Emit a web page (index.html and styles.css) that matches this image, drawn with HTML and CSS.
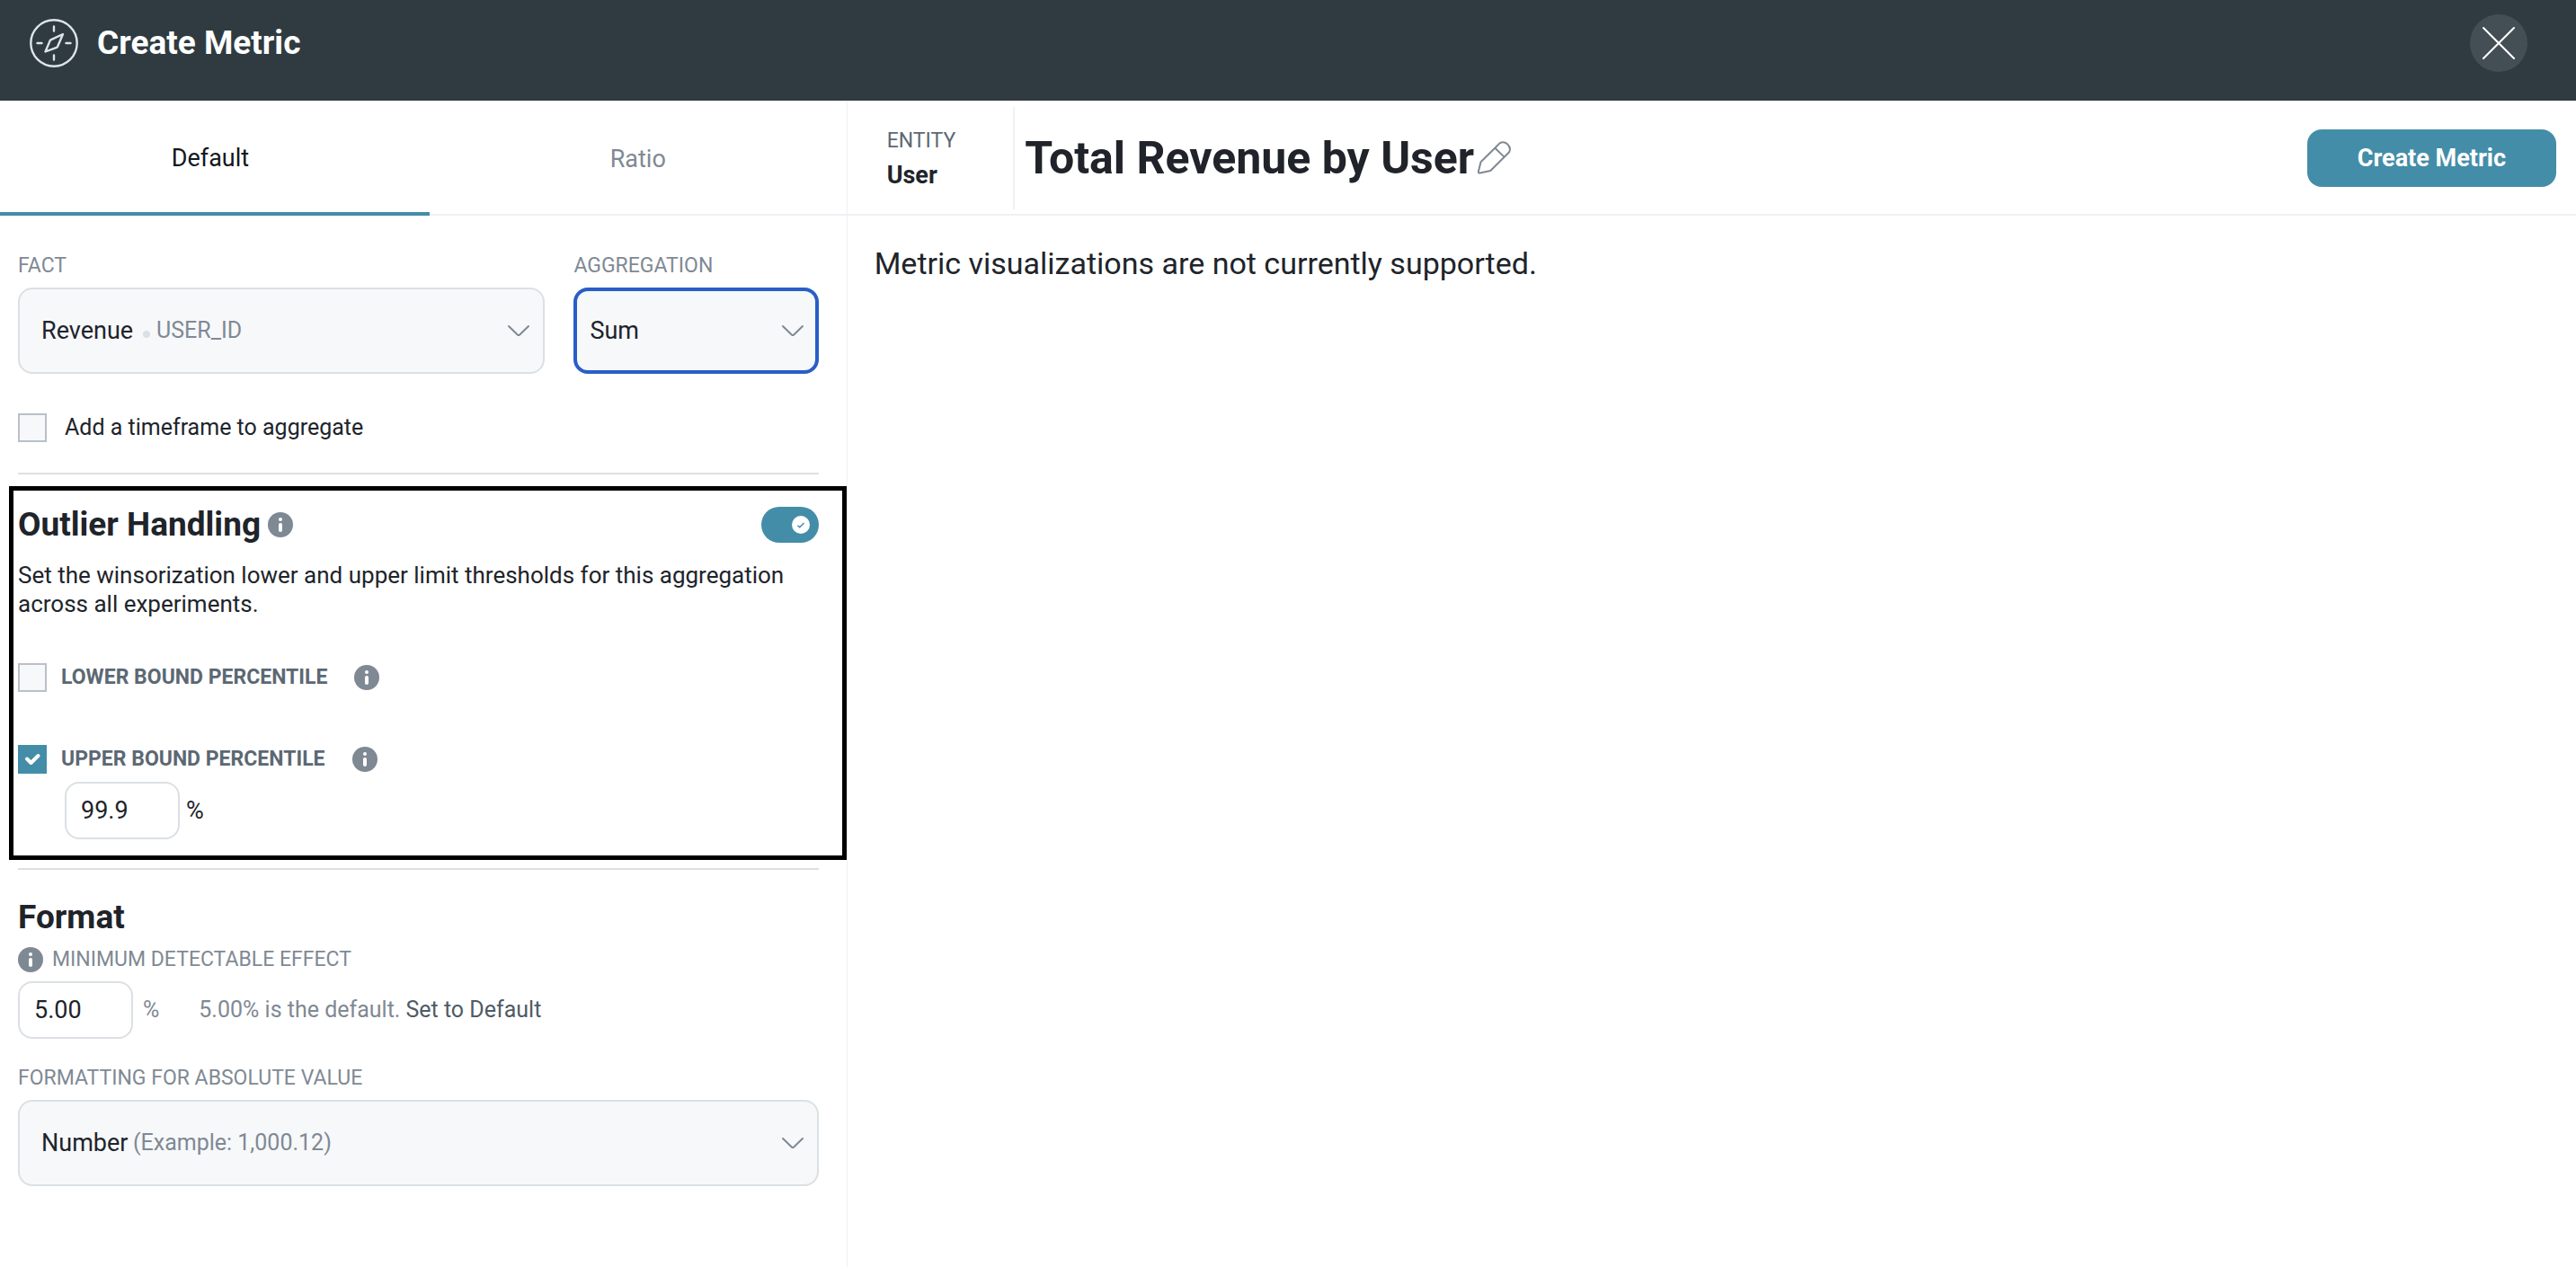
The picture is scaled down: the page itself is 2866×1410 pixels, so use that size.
FILE: index.html
```
<!DOCTYPE html>
<html lang="en">
<head>
<meta charset="utf-8">
<meta name="viewport" content="width=device-width, initial-scale=1">
<title>Create Metric</title>
<link rel="stylesheet" href="styles.css">
</head>
<body>
<svg class="sprite" aria-hidden="true">
  <symbol id="info" viewBox="0 0 28 28">
    <circle cx="14" cy="14" r="14" fill="#7f8994"/>
    <circle cx="14" cy="8" r="2" fill="#fff"/>
    <rect x="12" y="12" width="4" height="10" rx="2" fill="#fff"/>
  </symbol>
  <symbol id="chevron" viewBox="0 0 26 14">
    <path d="M2 2l9.800 9.400q1.200 1.100 2.400 0L24 2" fill="none" stroke="#7f8994" stroke-width="2" stroke-linecap="round"/>
  </symbol>
</svg>

<header class="topbar">
  <svg class="logo" viewBox="0 0 56 56" fill="none" stroke="#dde3e8" stroke-width="2.400" stroke-linecap="round" stroke-linejoin="round" aria-hidden="true">
    <circle cx="28" cy="28" r="25.700"/>
    <path d="M28 9.500v5M28 41.500v5M9.500 28h5M41.500 28h5"/>
    <path d="M38 18l-13.500 6.300q-.5.200-.8.800L18.500 37.500l12.500-4.700q.7-.3 1-.9z"/>
  </svg>
  <span class="topbar-title">Create Metric</span>
  <button class="close" type="button" aria-label="Close">
    <svg viewBox="0 0 64 64" fill="none" stroke="#fff" stroke-width="2" stroke-linecap="round" aria-hidden="true"><path d="M15 15l34 34M49 15L15 49"/></svg>
  </button>
</header>

<div class="layout">
  <aside class="sidebar">
    <div class="tabs" role="tablist">
      <button class="tab tab-active" type="button" role="tab" aria-selected="true">Default</button>
      <button class="tab" type="button" role="tab" aria-selected="false">Ratio</button>
    </div>

    <form class="form">
      <div class="field-row">
        <div class="field">
          <label class="caption" for="fact">FACT</label>
          <div class="select">
            <select id="fact"><option>Revenue</option></select>
            <span class="hint hint-fact"><span class="dot"></span>USER_ID</span>
            <svg class="chevron" aria-hidden="true"><use href="#chevron"/></svg>
          </div>
        </div>
        <div class="field">
          <label class="caption" for="aggregation">AGGREGATION</label>
          <div class="select">
            <select id="aggregation" class="focused"><option>Sum</option></select>
            <svg class="chevron" aria-hidden="true"><use href="#chevron"/></svg>
          </div>
        </div>
      </div>

      <div class="check-row timeframe">
        <span class="check"><input type="checkbox" id="timeframe"></span>
        <label class="timeframe-label" for="timeframe">Add a timeframe to aggregate</label>
      </div>
      <hr class="rule">

      <section class="outlier">
        <div class="outlier-head">
          <h2>Outlier Handling</h2>
          <svg class="info" aria-hidden="true"><use href="#info"/></svg>
          <span class="toggle">
            <input type="checkbox" role="switch" aria-label="Outlier Handling" checked>
            <svg viewBox="0 0 20 20" aria-hidden="true"><circle cx="10" cy="10" r="10" fill="#fff"/><path d="M6.500 10.800l2.200 2L13.500 8" fill="none" stroke="#448da8" stroke-width="1.500"/></svg>
          </span>
        </div>
        <p class="description">Set the winsorization lower and upper limit thresholds for this aggregation across all experiments.</p>

        <div class="check-row lower">
          <span class="check"><input type="checkbox" id="lower"></span>
          <label class="bound-label" for="lower">LOWER BOUND PERCENTILE</label>
          <svg class="info" aria-hidden="true"><use href="#info"/></svg>
        </div>
        <div class="check-row upper">
          <span class="check">
            <input type="checkbox" id="upper" checked>
            <svg viewBox="0 0 32 32" aria-hidden="true"><path d="M10 15.500l4.500 4.500 8-8" fill="none" stroke="#fff" stroke-width="4" stroke-linecap="round" stroke-linejoin="round"/></svg>
          </span>
          <label class="bound-label" for="upper">UPPER BOUND PERCENTILE</label>
          <svg class="info" aria-hidden="true"><use href="#info"/></svg>
        </div>
        <div class="bound-value">
          <input class="number" type="text" inputmode="decimal" value="99.9" aria-label="Upper bound percentile">
          <span>%</span>
        </div>
      </section>
      <hr class="rule rule-format">

      <h2 class="format-title">Format</h2>
      <div class="mde-label">
        <svg class="info" aria-hidden="true"><use href="#info"/></svg>
        <label class="caption" for="mde">MINIMUM DETECTABLE EFFECT</label>
      </div>
      <div class="mde">
        <input class="number" type="text" inputmode="decimal" id="mde" value="5.00">
        <span class="unit">%</span>
        <span>5.00% is the default.</span>
        <button class="link-button" type="button">Set to Default</button>
      </div>

      <div class="field">
        <label class="caption" for="format">FORMATTING FOR ABSOLUTE VALUE</label>
        <div class="select">
          <select id="format"><option>Number</option></select>
          <span class="hint hint-format">(Example: 1,000.12)</span>
          <svg class="chevron" aria-hidden="true"><use href="#chevron"/></svg>
        </div>
      </div>
    </form>
  </aside>

  <main class="main">
    <div class="main-head">
      <div class="entity">
        <span class="entity-label">ENTITY</span>
        <strong class="entity-name">User</strong>
      </div>
      <h1>Total Revenue by User</h1>
      <button class="edit" type="button" aria-label="Edit name">
        <svg viewBox="0 0 40 40" fill="none" stroke="#7f8994" stroke-width="2" stroke-linejoin="round" aria-hidden="true"><path d="M22.500 7.500l4-4.100q4.500-2.800 8.500.8 4.700 4.300 1.900 9.300L16.300 34 4.600 36.500q-2 .3-1.700-1.700L5.500 24.300zM21.300 8.800l10.200 9.800"/></svg>
      </button>
      <button class="create" type="button">Create Metric</button>
    </div>
    <p class="notice">Metric visualizations are not currently supported.</p>
  </main>
</div>
</body>
</html>
```
FILE: styles.css
```
* { box-sizing: border-box; }

body {
  margin: 0;
  min-height: 100vh;
  display: flex;
  flex-direction: column;
  background: #fff;
  color: #20242a;
  font: 27px/32px Roboto, "Liberation Sans", sans-serif;
}

h1, h2, p { margin: 0; }
h2 { font-size: 37px; line-height: 44px; }
button, input, select { font: inherit; color: inherit; margin: 0; }
button { border: 0; padding: 0; background: none; cursor: pointer; }
svg { display: block; }

.sprite { position: absolute; width: 0; height: 0; }

/* Top bar */
.topbar {
  display: flex;
  align-items: center;
  gap: 20px;
  height: 112px;
  padding: 0 54px 16px 32px;
  background: #2f3b41;
  color: #fff;
}
.logo { width: 56px; height: 56px; }
.topbar-title { font-size: 37px; line-height: 44px; font-weight: 700; }
.close {
  margin-left: auto;
  width: 64px;
  height: 64px;
  border-radius: 50%;
  background: #444f55;
}

/* Page split */
.layout {
  flex: 1;
  display: grid;
  grid-template-columns: 23fr 47fr;
}

/* Sidebar */
.tabs {
  display: grid;
  grid-template-columns: 34fr 33fr;
  height: 128px;
}
.tab {
  padding-top: 4px;
  border-bottom: 2px solid #eef1f5;
  color: #7f8994;
}
.tab-active {
  padding-right: 10px;
  border-bottom: 4px solid #448da8;
  color: #14181d;
}
.form { padding: 40px 31px 40px 20px; }

.field-row {
  display: grid;
  grid-template-columns: 28fr 13fr;
  gap: 32px;
}
.caption {
  display: block;
  font-size: 23px;
  color: #7f8994;
}
.select { display: grid; align-items: center; margin-top: 8px; }
.select > * { grid-area: 1 / 1; }
.select select {
  appearance: none;
  width: 100%;
  height: 96px;
  padding: 0 60px 0 24px;
  border: 2px solid #dbe0e4;
  border-radius: 16px;
  background: #f7f8fa;
  outline: none;
}
.select .focused {
  padding-left: 14px;
  border: 4px solid #285ec8;
}
.chevron {
  justify-self: end;
  width: 26px;
  height: 14px;
  margin-right: 16px;
  pointer-events: none;
}
.hint {
  display: flex;
  align-items: center;
  color: #7f8994;
  pointer-events: none;
}
.hint-fact { padding-left: 139px; gap: 7px; font-size: 25px; }
.hint-format { padding-left: 128px; font-size: 25px; }
.dot {
  width: 8px;
  height: 8px;
  margin-top: 8px;
  border-radius: 50%;
  background: #dbe0e4;
}

.check-row { display: flex; align-items: center; }
.check { display: grid; width: 32px; height: 32px; }
.check > * { grid-area: 1 / 1; pointer-events: none; }
.check input {
  appearance: none;
  width: 32px;
  height: 32px;
  border: 2px solid #b9c0c7;
  background: #f7f8fa;
  pointer-events: auto;
}
.check input:checked { border-color: #448da8; background: #448da8; }

.timeframe { margin-top: 44px; gap: 20px; }
.timeframe-label { font-size: 25px; }

.rule {
  height: 2px;
  margin: 34px 0 0;
  border: 0;
  background: #dbe0e4;
}
.rule-format { margin-top: 9px; }

.info { flex: none; width: 28px; height: 28px; }

/* Outlined section, wider than the form column */
.outlier {
  margin: 13px -31px 0 -10px;
  padding: 18px 26px 18px 5px;
  border: 5px solid #000;
}
.outlier-head { display: flex; align-items: center; gap: 8px; height: 40px; }
.toggle {
  display: grid;
  align-items: center;
  width: 64px;
  height: 40px;
  margin-left: auto;
}
.toggle > * { grid-area: 1 / 1; }
.toggle input {
  appearance: none;
  width: 64px;
  height: 40px;
  border-radius: 20px;
  background: #448da8;
}
.toggle svg {
  justify-self: end;
  width: 20px;
  height: 20px;
  margin-right: 10px;
  pointer-events: none;
}
.description { margin-top: 20px; font-size: 26px; }
.lower { margin-top: 50px; }
.upper { margin-top: 59px; }
.bound-label {
  margin: 0 30px 0 16px;
  font-size: 23px;
  font-weight: 700;
  color: #5c6873;
}
.bound-value {
  display: flex;
  align-items: center;
  gap: 7px;
  margin: 9px 0 0 52px;
}
.number {
  width: 128px;
  height: 64px;
  padding: 0 16px;
  border: 2px solid #dbe0e4;
  border-radius: 16px;
  background: #fff;
}

.format-title { margin-top: 31px; }
.mde-label { display: flex; align-items: center; gap: 10px; margin-top: 9px; }
.mde {
  display: flex;
  align-items: center;
  margin: 8px 0 28px;
  font-size: 25px;
  color: #7f8994;
}
.mde .number { font-size: 27px; color: #20242a; }
.unit { margin: 0 44px 0 11px; }
.link-button { margin-left: 6px; color: #4f5b66; }

/* Main panel */
.main { border-left: 1px solid #eef1f5; }
.main-head {
  display: flex;
  align-items: center;
  height: 128px;
  padding: 2px 22px 0 0;
  border-bottom: 2px solid #eef1f5;
}
.entity {
  display: flex;
  flex-direction: column;
  justify-content: center;
  gap: 6px;
  height: 114px;
  padding: 0 64px 0 44px;
  border-right: 2px solid #eef1f5;
}
.entity-label { font-size: 23px; color: #5c6873; }
h1 { margin-left: 11px; font-size: 50px; line-height: 60px; }
.edit { width: 40px; height: 40px; margin-left: 2px; }
.create {
  margin-left: auto;
  height: 64px;
  padding: 0 56px;
  border-radius: 16px;
  background: #448da8;
  color: #fff;
  font-weight: 700;
}
.notice { padding: 33px 30px; font-size: 34px; line-height: 40px; }
```
